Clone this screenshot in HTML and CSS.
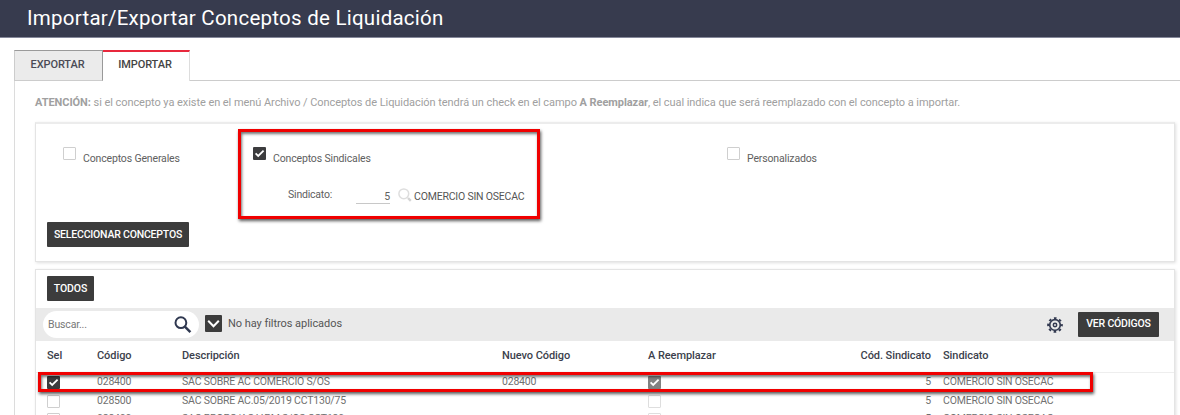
FILE: index.html
```html
<!DOCTYPE html>
<html lang="es">
<head>
<meta charset="utf-8">
<title>Importar/Exportar Conceptos de Liquidación</title>
<link rel="stylesheet" href="styles.css">
</head>
<body>
<svg class="defs" width="0" height="0">
  <symbol id="check" viewBox="0 0 13 13"><path d="M2.6 6.4 5.2 9 10.6 3.6" fill="none" stroke="#fff" stroke-width="1.8"/></symbol>
</svg>
<header class="topbar"><h1>Importar/Exportar Conceptos de Liquidación</h1></header>
<nav class="tabs">
  <span class="tab">EXPORTAR</span>
  <span class="tab tab-active">IMPORTAR</span>
  <span class="tab-rest"></span>
</nav>
<main class="panel">
  <p class="notice"><b>ATENCIÓN:</b> si el concepto ya existe en el menú Archivo / Conceptos de Liquidación tendrá un check en el campo <b>A Reemplazar</b>, el cual indica que será reemplazado con el concepto a importar.</p>
  <section class="card filters">
    <div class="options">
      <label class="option"><span class="box"></span><span class="name">Conceptos Generales</span></label>
      <div class="union">
        <label class="option"><span class="box on"><svg><use href="#check"/></svg></span><span class="name">Conceptos Sindicales</span></label>
        <div class="field">
          <span class="field-label">Sindicato:</span>
          <span class="field-input">5</span>
          <svg class="lens" viewBox="0 0 14 14"><circle cx="5.8" cy="5.8" r="4.9" fill="none" stroke="#dedede" stroke-width="1.5"/><path d="M10 10 12.8 12.8" stroke="#d4d4d4" stroke-width="2.4"/></svg>
          <span class="field-value">COMERCIO SIN OSECAC</span>
        </div>
      </div>
      <label class="option"><span class="box"></span><span class="name">Personalizados</span></label>
    </div>
    <button class="btn select">SELECCIONAR CONCEPTOS</button>
  </section>
  <section class="card list">
    <div class="actions"><button class="btn all">TODOS</button></div>
    <div class="toolbar">
      <div class="search"><span>Buscar...</span>
        <svg viewBox="0 0 18 18"><circle cx="6.9" cy="6.7" r="5.4" fill="none" stroke="#2f3850" stroke-width="2"/><path d="M10.9 10.7 16.4 16.2" stroke="#2f3850" stroke-width="2.5"/></svg>
      </div>
      <span class="toggle"><svg viewBox="0 0 17 17"><path d="M3.2 5.8 8.5 11.2 13.8 5.8" fill="none" stroke="#fff" stroke-width="2"/></svg></span>
      <span class="applied">No hay filtros aplicados</span>
      <svg class="gear" viewBox="0 0 16 16"><g fill="none" stroke="#343b52"><circle cx="8" cy="8" r="5.3" stroke-width="1.7"/><circle cx="8" cy="8" r="6.9" stroke-width="1.9" stroke-dasharray="2.6 2.819" stroke-dashoffset="1.3"/><circle cx="8" cy="8" r="1.7" stroke-width="1.5"/></g></svg>
      <button class="btn codes">VER CÓDIGOS</button>
    </div>
    <div class="row head"><span>Sel</span><span>Código</span><span>Descripción</span><span>Nuevo Código</span><span>A Reemplazar</span><span class="num">Cód. Sindicato</span><span>Sindicato</span></div>
    <div class="row first"><span class="box on"><svg><use href="#check"/></svg></span><span>028400</span><span>SAC SOBRE AC COMERCIO S/OS</span><span>028400</span><span class="box on dim"><svg><use href="#check"/></svg></span><span class="num">5</span><span>COMERCIO SIN OSECAC</span></div>
    <div class="row"><span class="box"></span><span>028500</span><span>SAC SOBRE AC.05/2019 CCT130/75</span><span></span><span class="box dim"></span><span class="num">5</span><span>COMERCIO SIN OSECAC</span></div>
    <div class="row"><span class="box"></span><span>028400</span><span>SAC PROPC/AC.V.PM S/OS CCT130</span><span></span><span class="box dim"></span><span class="num">5</span><span>COMERCIO SIN OSECAC</span></div>
  </section>
</main>
<div class="mark mark-union"></div>
<div class="mark mark-row"></div>
</body>
</html>
```
FILE: styles.css
```css
* { box-sizing: border-box; }
html, body { height: 415px; overflow: hidden; }
body { margin: 0; background: #fff; font-family: Roboto, sans-serif; font-size: 11px; color: #606060; position: relative; }
.defs { position: absolute; }
.topbar { height: 38px; background: #373b4e; border-bottom: 1px solid #85889a; padding-left: 27px; }
h1 { margin: 0; font-size: 20.5px; line-height: 37px; font-weight: 400; letter-spacing: .25px; color: #fff; white-space: nowrap; }
.tabs { display: flex; height: 31px; margin: 12px 0 0 14px; }
.tab { width: 89px; padding: 1px 2px 0 0; line-height: 26px; text-align: center; font-weight: 500; font-size: 11px; letter-spacing: -.1px; color: #4a4a55; background: #ebebeb; border: 1px solid #ccc; border-top: 1px solid #9a9a9a; border-right-color: #999; }
.tab-active { width: 87px; background: #fff; border: 0; border-top: 2px solid #e8283c; border-right: 1px solid #ddd; padding-top: 0; color: #444; }
.tab-rest { flex: 1; border-bottom: 1px solid #ccc; }
.panel { margin-left: 14px; height: 334px; border-left: 1px solid #dcdcdc; padding: 0 5px 0 20px; overflow: hidden; }
.notice { margin: 0; height: 41px; padding-top: 14px; line-height: 15px; font-size: 11px; letter-spacing: -.058px; color: #a0a0a0; white-space: nowrap; }
.card { background: #fff; border: 1px solid #e4e4e4; box-shadow: 1px 1px 3px rgba(0,0,0,.13); }
.filters { height: 140px; padding: 24px 0 0 11px; border-top: 2px solid #ececec; }
.options { display: grid; grid-template-columns: 190px 474px 1fr; padding-left: 16px; height: 74px; }
.option { display: flex; gap: 7px; }
.option .name { padding-top: 3px; line-height: 15px; font-size: 10.5px; letter-spacing: -.15px; white-space: nowrap; }
.box { display: block; width: 13px; height: 13px; border: 1px solid #cfcfcf; border-radius: 1px; background: #fff; flex: none; }
.option .box { margin-top: -1px; }
.box.on { background: #3c3c3e; border: 0; }
.box svg { display: block; width: 13px; height: 13px; }
.box.dim { border-color: #dedede; }
.box.on.dim { background: #828282; }
.field { display: flex; align-items: flex-start; padding: 21px 0 0 35px; height: 44px; line-height: 15px; white-space: nowrap; font-size: 10.5px; letter-spacing: -.2px; }
.field-label { width: 68px; }
.field-input { width: 34px; margin-right: 1px; height: 17px; padding-top: 2px; border-bottom: 1px solid #c8c8c8; text-align: right; }
.lens { width: 14px; height: 14px; margin: 1px 2px 0 7px; }
.field-value { padding-top: 2px; color: #555; }
.btn { display: block; border: 0; border-radius: 1px; padding: 0; height: 25px; background: #3c3c3c; color: #fff; font: 500 10.5px/24px Roboto, sans-serif; letter-spacing: -.2px; white-space: nowrap; text-align: center; }
.select { width: 142px; }
.list { margin-top: 7px; height: 160px; }
.actions { height: 38px; padding: 6px 0 0 11px; }
.all { width: 47px; letter-spacing: -.1px; }
.toolbar { height: 33px; background: #eaeaea; display: flex; align-items: center; padding: 0 15px 0 7px; }
.search { width: 156px; height: 27px; border-radius: 14px; background: #fff; display: flex; align-items: center; justify-content: space-between; padding: 0 7px 0 5px; color: #777; font-size: 10.5px; letter-spacing: -.15px; }
.search svg { width: 18px; height: 18px; }
.toggle { width: 17px; height: 17px; margin: -2px 6px 0 6px; background: #3c3c3c; border-radius: 1px; }
.toggle svg { display: block; }
.applied { flex: 1; margin-top: -2px; font-size: 11px; letter-spacing: -.05px; color: #555; }
.gear { width: 16px; height: 16px; margin: 0 15px 0 0; }
.codes { width: 81px; margin-top: -1px; }
.row { display: grid; grid-template-columns: 50px 85px 320px 146px 183px 100px 12px 1fr; padding-left: 11px; height: 18px; line-height: 20px; font-size: 10.5px; letter-spacing: -.2px; color: #707070; white-space: nowrap; }
.row .num { text-align: right; }
.row > :last-child { grid-column: 8; }
.row .box { margin-top: 4px; }
.first { line-height: 18px; }
.first .box { margin-top: 3px; }
.head { height: 32px; line-height: 30px; font-size: 11px; font-weight: 500; letter-spacing: -.07px; color: #3c3f4c; border-bottom: 1px solid #eee; }
.mark { position: absolute; border: 3px solid #f00000; box-shadow: 1px 2px 3px rgba(0,0,0,.65), inset 1px 2px 3px rgba(0,0,0,.55); }
.mark-union { left: 238px; top: 129px; width: 302px; height: 90px; }
.mark-row { left: 38px; top: 372px; width: 1055px; height: 20px; }
```
